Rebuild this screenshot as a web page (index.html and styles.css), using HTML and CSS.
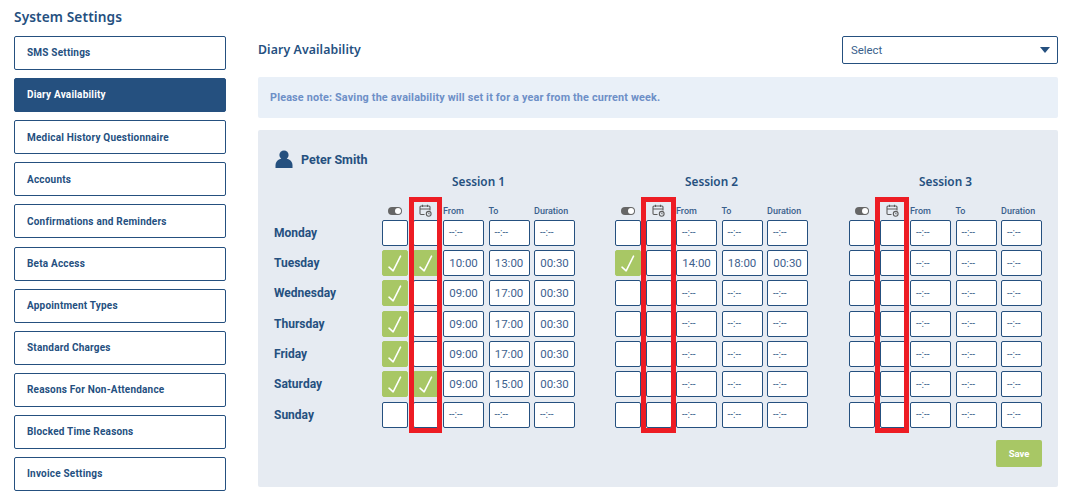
FILE: index.html
```html
<!DOCTYPE html>
<html lang="en">
<head>
<meta charset="utf-8">
<title>System Settings</title>
<link rel="stylesheet" href="styles.css">
</head>
<body>
<svg class="defs" aria-hidden="true">
  <symbol id="tick" viewBox="0 0 26 26"><path d="M6.500 17.500 L11 21.500 L19 5.500" fill="none" stroke="#fff" stroke-width="1.7" stroke-linecap="round" stroke-linejoin="round"/></symbol>
  <symbol id="toggle" viewBox="0 0 14 8"><rect width="14" height="8" rx="4" fill="#666"/><circle cx="10" cy="4" r="3" fill="#fff"/></symbol>
  <symbol id="cal" viewBox="0 0 13 13"><path d="M5.500 10.500H2a1 1 0 0 1-1-1V3a1 1 0 0 1 1-1h8a1 1 0 0 1 1 1v3.500M1 5h10M3.500.7v2.400M8.500.7v2.400" fill="none" stroke="#5c5c5c" stroke-width="1.100"/><circle cx="9.700" cy="9.800" r="2.400" fill="none" stroke="#5c5c5c" stroke-width="1.100"/><path d="M9.700 8.700v1.200h1" fill="none" stroke="#5c5c5c" stroke-width=".8"/></symbol>
</svg>
<div class="page">
  <h1 class="title">System Settings</h1>
  <div class="columns">
    <nav class="side">
      <a class="side-item">SMS Settings</a>
      <a class="side-item active">Diary Availability</a>
      <a class="side-item">Medical History Questionnaire</a>
      <a class="side-item">Accounts</a>
      <a class="side-item">Confirmations and Reminders</a>
      <a class="side-item">Beta Access</a>
      <a class="side-item">Appointment Types</a>
      <a class="side-item">Standard Charges</a>
      <a class="side-item">Reasons For Non-Attendance</a>
      <a class="side-item">Blocked Time Reasons</a>
      <a class="side-item">Invoice Settings</a>
    </nav>
    <main class="main">
      <div class="head">
        <h2 class="head-title">Diary Availability</h2>
        <div class="select"><span>Select</span><span class="caret"></span></div>
      </div>
      <div class="note">Please note: Saving the availability will set it for a year from the current week.</div>
      <section class="panel">
        <div class="person">
          <svg class="person-icon" viewBox="0 0 18 18"><circle cx="9" cy="5" r="4.600" fill="#25507f"/><path d="M0.500 18v-2.500C0.500 11.500 3.500 9 6 9h6c2.500 0 5.500 2.500 5.500 6.500V18z" fill="#25507f"/></svg>
          <span>Peter Smith</span>
        </div>
        <div class="sched">
          <div class="days">
            <div class="day">Monday</div><div class="day">Tuesday</div><div class="day">Wednesday</div><div class="day">Thursday</div><div class="day">Friday</div><div class="day">Saturday</div><div class="day">Sunday</div>
          </div>

          <div class="session">
            <div class="session-title">Session 1</div>
            <div class="grid">
              <div class="hd ic"><svg class="i-toggle"><use href="#toggle"/></svg></div><div class="hd ic"><svg class="i-cal"><use href="#cal"/></svg></div><div class="hd">From</div><div class="hd">To</div><div class="hd">Duration</div>
              <div class="box"></div><div class="box"></div><div class="t e">--:--</div><div class="t e">--:--</div><div class="t e">--:--</div>
              <div class="box on"><svg class="tick"><use href="#tick"/></svg></div><div class="box on"><svg class="tick"><use href="#tick"/></svg></div><div class="t">10:00</div><div class="t">13:00</div><div class="t">00:30</div>
              <div class="box on"><svg class="tick"><use href="#tick"/></svg></div><div class="box"></div><div class="t">09:00</div><div class="t">17:00</div><div class="t">00:30</div>
              <div class="box on"><svg class="tick"><use href="#tick"/></svg></div><div class="box"></div><div class="t">09:00</div><div class="t">17:00</div><div class="t">00:30</div>
              <div class="box on"><svg class="tick"><use href="#tick"/></svg></div><div class="box"></div><div class="t">09:00</div><div class="t">17:00</div><div class="t">00:30</div>
              <div class="box on"><svg class="tick"><use href="#tick"/></svg></div><div class="box on"><svg class="tick"><use href="#tick"/></svg></div><div class="t">09:00</div><div class="t">15:00</div><div class="t">00:30</div>
              <div class="box"></div><div class="box"></div><div class="t e">--:--</div><div class="t e">--:--</div><div class="t e">--:--</div>
            </div>
            <div class="frame frame-a"></div>
          </div>

          <div class="session">
            <div class="session-title">Session 2</div>
            <div class="grid">
              <div class="hd ic"><svg class="i-toggle"><use href="#toggle"/></svg></div><div class="hd ic"><svg class="i-cal"><use href="#cal"/></svg></div><div class="hd">From</div><div class="hd">To</div><div class="hd">Duration</div>
              <div class="box"></div><div class="box"></div><div class="t e">--:--</div><div class="t e">--:--</div><div class="t e">--:--</div>
              <div class="box on"><svg class="tick"><use href="#tick"/></svg></div><div class="box"></div><div class="t">14:00</div><div class="t">18:00</div><div class="t">00:30</div>
              <div class="box"></div><div class="box"></div><div class="t e">--:--</div><div class="t e">--:--</div><div class="t e">--:--</div>
              <div class="box"></div><div class="box"></div><div class="t e">--:--</div><div class="t e">--:--</div><div class="t e">--:--</div>
              <div class="box"></div><div class="box"></div><div class="t e">--:--</div><div class="t e">--:--</div><div class="t e">--:--</div>
              <div class="box"></div><div class="box"></div><div class="t e">--:--</div><div class="t e">--:--</div><div class="t e">--:--</div>
              <div class="box"></div><div class="box"></div><div class="t e">--:--</div><div class="t e">--:--</div><div class="t e">--:--</div>
            </div>
            <div class="frame frame-b"></div>
          </div>

          <div class="session">
            <div class="session-title">Session 3</div>
            <div class="grid">
              <div class="hd ic"><svg class="i-toggle"><use href="#toggle"/></svg></div><div class="hd ic"><svg class="i-cal"><use href="#cal"/></svg></div><div class="hd">From</div><div class="hd">To</div><div class="hd">Duration</div>
              <div class="box"></div><div class="box"></div><div class="t e">--:--</div><div class="t e">--:--</div><div class="t e">--:--</div>
              <div class="box"></div><div class="box"></div><div class="t e">--:--</div><div class="t e">--:--</div><div class="t e">--:--</div>
              <div class="box"></div><div class="box"></div><div class="t e">--:--</div><div class="t e">--:--</div><div class="t e">--:--</div>
              <div class="box"></div><div class="box"></div><div class="t e">--:--</div><div class="t e">--:--</div><div class="t e">--:--</div>
              <div class="box"></div><div class="box"></div><div class="t e">--:--</div><div class="t e">--:--</div><div class="t e">--:--</div>
              <div class="box"></div><div class="box"></div><div class="t e">--:--</div><div class="t e">--:--</div><div class="t e">--:--</div>
              <div class="box"></div><div class="box"></div><div class="t e">--:--</div><div class="t e">--:--</div><div class="t e">--:--</div>
            </div>
            <div class="frame frame-c"></div>
          </div>
        </div>
        <div class="actions"><button class="save">Save</button></div>
      </section>
    </main>
  </div>
</div>
</body>
</html>
```
FILE: styles.css
```css
* { box-sizing: border-box; }
html, body { margin: 0; height: 495px; overflow: hidden; background: #fff; }
body { font-family: Roboto, sans-serif; color: #25507f; }
.defs { display: none; }
.page { padding: 8px 8px 0 14px; }
.title { margin: 0; height: 28px; font: 600 13.7px/17px "Noto Sans", sans-serif; letter-spacing: 0.1px; color: #25507f; }
.columns { display: flex; gap: 32px; align-items: flex-start; }
.side { width: 212px; flex: none; display: flex; flex-direction: column; gap: 8.12px; }
.side-item { height: 34px; display: flex; align-items: center; padding: 0 0 0.4px 12px; border: 1px solid #25507f; border-radius: 2px; font-size: 10px; font-weight: 700; letter-spacing: 0.2px; color: #25507f; background: #fff; }
.side-item.active { background: #25507f; color: #fff; }
.main { width: 800px; flex: none; }
.head { display: flex; justify-content: space-between; align-items: center; height: 28px; }
.head-title { margin: 0; font: 600 12.3px/16px "Noto Sans", sans-serif; letter-spacing: 0.1px; color: #25507f; }
.select { width: 216px; height: 28px; border: 1px solid #25507f; border-radius: 2px; display: flex; justify-content: space-between; align-items: center; padding: 0 7px 0 8px; font-size: 11.4px; color: #3a5f8c; }
.caret { width: 0; height: 0; border-left: 5.5px solid transparent; border-right: 5.5px solid transparent; border-top: 6px solid #25507f; }
.note { margin-top: 13px; height: 41px; background: #e9f0f8; border-radius: 2px; padding-left: 12px; display: flex; align-items: center; font-size: 10.8px; font-weight: 700; letter-spacing: 0.17px; color: #6d8fc7; }
.panel { margin-top: 12px; height: 357px; background: #e6ebf2; border-radius: 2px; padding: 20px 16px 0; }
.person { display: flex; align-items: center; gap: 8px; height: 18px; font-size: 12.5px; font-weight: 700; color: #25507f; }
.person-icon { width: 18px; height: 18px; margin-left: 1px; }
.sched { display: grid; grid-template-columns: 108px 233px 234px 193px; margin-top: 6px; }
.days { padding-top: 45.8px; display: flex; flex-direction: column; gap: 4.33px; }
.day { height: 26px; display: flex; align-items: center; font-size: 12px; font-weight: 700; color: #25507f; }
.session { position: relative; width: 193px; }
.session-title { height: 16px; font: 600 11.8px/15px "Noto Sans", sans-serif; color: #25507f; text-align: center; }
.grid { display: grid; grid-template-columns: 26px 26px 41px 41px 41px; column-gap: 4.5px; row-gap: 4.33px; grid-template-rows: 25.47px repeat(7, 26px); }
.hd { align-self: end; margin-bottom: -2px; font-size: 9px; font-weight: 500; line-height: 11px; color: #3a5f8c; }
.hd.ic { display: flex; justify-content: center; align-items: center; height: 14px; }
.i-toggle { width: 14px; height: 8px; margin-top: 1px; }
.i-cal { width: 13px; height: 13px; margin-top: 1px; }
.box { height: 26px; background: #fff; border: 1px solid #25507f; border-radius: 2px; }
.box.on { background: #a8c765; border-color: #a8c765; }
.tick { display: block; width: 24px; height: 24px; }
.t { height: 26px; background: #fff; border: 1px solid #25507f; border-radius: 2px; display: flex; align-items: center; justify-content: center; font-size: 11.5px; color: #3e618e; }
.t.e { justify-content: flex-start; padding-left: 5px; font-size: 10px; color: #3a5f8c; }
.frame { position: absolute; top: 23px; bottom: -5px; border: 5px solid #ed1c24; }
.frame-a { left: 27px; width: 33px; }
.frame-b { left: 26px; width: 35px; }
.frame-c { left: 26px; width: 34px; }
.actions { display: flex; justify-content: flex-end; margin-top: 12px; }
.save { width: 46px; height: 27px; border: 0; border-radius: 2px; background: #a8c765; color: #fff; font: 700 9.5px Roboto, sans-serif; }
```
